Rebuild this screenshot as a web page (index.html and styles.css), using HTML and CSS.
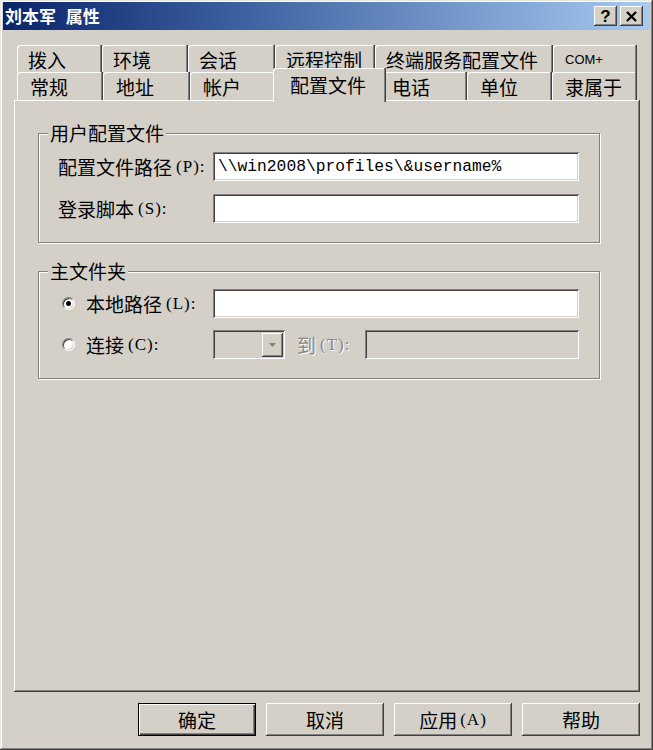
FILE: index.html
```html
<!DOCTYPE html>
<html lang="zh-CN">
<head>
<meta charset="utf-8">
<title>刘本军 属性</title>
<link rel="stylesheet" href="styles.css">
</head>
<body>
<div class="window">
  <div class="titlebar">
    <span class="title">刘本军 属性</span>
    <div class="tbtns">
      <span class="tbtn help">?</span>
      <span class="tbtn close"><svg width="11" height="11" viewBox="0 0 11 11"><path d="M1 1 L10 10 M10 1 L1 10" stroke="#000" stroke-width="2.2" fill="none"/></svg></span>
    </div>
  </div>
  <div class="content">
    <div class="tabs">
      <div class="tabrow row1">
        <div class="tab">拨入</div>
        <div class="tab">环境</div>
        <div class="tab">会话</div>
        <div class="tab">远程控制</div>
        <div class="tab">终端服务配置文件</div>
        <div class="tab latin">COM+</div>
      </div>
      <div class="tabrow row2">
        <div class="tab">常规</div>
        <div class="tab">地址</div>
        <div class="tab">帐户</div>
        <div class="tab active">配置文件</div>
        <div class="tab tight">电话</div>
        <div class="tab">单位</div>
        <div class="tab">隶属于</div>
      </div>
    </div>
    <div class="panel">
      <fieldset class="group g1">
        <legend>用户配置文件</legend>
        <div class="form">
          <label class="lbl">配置文件路径<span class="acc">(P):</span></label>
          <div class="field">\\win2008\profiles\&amp;username%</div>
          <label class="lbl">登录脚本<span class="acc">(S):</span></label>
          <div class="field"></div>
        </div>
      </fieldset>
      <fieldset class="group g2">
        <legend>主文件夹</legend>
        <div class="form">
          <label class="lbl opt"><span class="radio checked"></span>本地路径<span class="acc">(L):</span></label>
          <div class="field"></div>
          <label class="lbl opt"><span class="radio"></span>连接<span class="acc">(C):</span></label>
          <div class="connect">
            <div class="combo"><span class="drop"><svg width="9" height="6" viewBox="0 0 9 6"><path d="M1 1 H8 L4.5 5 Z" fill="#808080"/></svg></span></div>
            <span class="to">到<span class="acc">(T):</span></span>
            <div class="field disabled"></div>
          </div>
        </div>
      </fieldset>
    </div>
    <div class="buttons">
      <button class="btn default">确定</button>
      <button class="btn">取消</button>
      <button class="btn">应用<span class="acc">(A)</span></button>
      <button class="btn">帮助</button>
    </div>
  </div>
</div>
</body>
</html>
```
FILE: styles.css
```css
* { box-sizing: border-box; }
html, body { margin: 0; padding: 0; }
body {
  width: 653px;
  height: 750px;
  overflow: hidden;
  background: #d4d0c8;
  font-family: "Noto Sans CJK SC", "Noto Sans", sans-serif;
  color: #000;
}
.window {
  width: 653px;
  height: 750px;
  padding: 2px 3px 3px 3px;
  background: #d4d0c8;
  box-shadow: inset -1px -1px 0 #404040, inset 1px 1px 0 #e8e6e0, inset -2px -2px 0 #808080, inset 2px 2px 0 #fff;
  display: flex;
  flex-direction: column;
}
.titlebar {
  height: 28px;
  flex: none;
  background: linear-gradient(to right, #0a246a 0%, #3a5e9e 35%, #a6caf0 100%);
  display: flex;
  align-items: center;
  justify-content: space-between;
  padding: 0 7px 0 2px;
}
.title {
  color: #fff;
  font-weight: 700;
  font-size: 17px;
  line-height: 20px;
  word-spacing: 6px;
  white-space: pre;
}
.tbtns { display: flex; gap: 3px; }
.tbtn {
  width: 23px;
  height: 20px;
  background: #d4d0c8;
  box-shadow: inset -1px -1px 0 #404040, inset 1px 1px 0 #fff, inset -2px -2px 0 #808080;
  display: flex;
  align-items: center;
  justify-content: center;
  font-family: "Liberation Sans", Arial, sans-serif;
  font-weight: 700;
  font-size: 17px;
  line-height: 1;
}
.content {
  flex: 1;
  padding: 15px 10px 0 11px;
  display: flex;
  flex-direction: column;
}
.tabs { padding: 0 3px; flex: none; }
.tabrow { display: grid; }
.row1 { grid-template-columns: 85px 86px 87px 100px 178px 84px; height: 27px; }
.row2 { grid-template-columns: 86px 87px 85px 109px 83px 85px 85px; height: 28px; }
.tab {
  background: #d4d0c8;
  border-top-left-radius: 3px;
  box-shadow: inset -1px 0 0 #404040, inset -2px 0 0 #808080, inset 1px 1px 0 #fff;
  font-size: 19px;
  line-height: 19px;
  padding-left: 11px;
  padding-top: 1px;
  display: flex;
  align-items: center;
  white-space: nowrap;
}
.row2 .tab { padding-left: 13px; }
.row2 .tab.tight { padding-left: 8px; }
.tab.latin {
  font-family: "Liberation Sans", Arial, sans-serif;
  font-size: 13px;
  padding-left: 12px;
}
.tab.active {
  position: relative;
  z-index: 1;
  margin: -4px -2px -2px -2px;
  padding-left: 17px;
  padding-top: 0;
  padding-bottom: 2px;
}
.panel {
  height: 592px;
  flex: none;
  background: #d4d0c8;
  box-shadow: inset -1px -1px 0 #404040, inset 1px 1px 0 #fff, inset -2px -2px 0 #808080;
  padding: 23px 40px 0 24px;
}
.group {
  margin: 0;
  padding: 0;
  min-width: 0;
  border: 1px solid #808080;
  box-shadow: 1px 1px 0 #fff, inset 1px 1px 0 #fff;
}
.group legend {
  margin-left: 9px;
  padding: 0 2px;
  font-size: 19px;
  line-height: 20px;
  background: #d4d0c8;
}
.g2 { margin-top: 18px; }
.form {
  display: grid;
  grid-template-columns: 155px 366px;
  grid-auto-rows: 29px;
  align-items: center;
  padding: 9px 0 19px 19px;
}
.g1 .form { row-gap: 13px; }
.g2 .form { row-gap: 12px; padding-top: 8px; }
.lbl {
  font-size: 19px;
  line-height: 29px;
  white-space: nowrap;
  display: flex;
  align-items: center;
}
.acc {
  font-family: "Liberation Serif", "Times New Roman", serif;
  font-size: 17px;
  letter-spacing: 1px;
  margin-left: 4px;
}
.opt { padding-left: 4px; }
.radio {
  width: 13px;
  height: 13px;
  border-radius: 50%;
  background: #fff;
  border: 1px solid;
  border-color: #808080 #fff #fff #808080;
  box-shadow: inset 1px 1px 0 #404040, inset -1px -1px 0 #d4d0c8;
  margin-right: 11px;
  flex: none;
  display: flex;
  align-items: center;
  justify-content: center;
}
.radio.checked::after {
  content: "";
  width: 5px;
  height: 5px;
  border-radius: 50%;
  background: #000;
}
.field {
  height: 29px;
  background: #fff;
  box-shadow: inset 1px 1px 0 #808080, inset -1px -1px 0 #fff, inset 2px 2px 0 #404040, inset -2px -2px 0 #d4d0c8;
  padding-left: 5px;
  font-family: "Liberation Mono", "Courier New", monospace;
  font-size: 16.3px;
  line-height: 29px;
  white-space: pre;
  overflow: hidden;
}
.field.disabled { background: #d4d0c8; width: 214px; margin-left: auto; }
.connect { display: flex; align-items: center; height: 29px; }
.combo {
  width: 72px;
  height: 29px;
  background: #d4d0c8;
  box-shadow: inset 1px 1px 0 #808080, inset -1px -1px 0 #fff, inset 2px 2px 0 #404040, inset -2px -2px 0 #d4d0c8;
  display: flex;
  justify-content: flex-end;
  align-items: center;
  padding-right: 2px;
}
.drop {
  width: 21px;
  height: 24px;
  background: #d4d0c8;
  box-shadow: inset -1px -1px 0 #404040, inset 1px 1px 0 #fff, inset -2px -2px 0 #808080;
  display: flex;
  align-items: center;
  justify-content: center;
}
.to {
  margin-left: 12px;
  font-size: 19px;
  color: #8a8780;
  text-shadow: 1px 1px 0 #fff;
  white-space: nowrap;
  display: flex;
  align-items: center;
}
.buttons {
  display: flex;
  justify-content: flex-end;
  gap: 10px;
  margin-top: 11px;
  flex: none;
}
.btn {
  width: 118px;
  height: 33px;
  margin: 0;
  padding: 0;
  border: none;
  background: #d4d0c8;
  box-shadow: inset -1px -1px 0 #404040, inset 1px 1px 0 #fff, inset -2px -2px 0 #808080;
  font-family: "Noto Sans CJK SC", "Noto Sans", sans-serif;
  font-size: 19px;
  line-height: 33px;
  color: #000;
  display: flex;
  align-items: center;
  justify-content: center;
}
.btn .acc { margin-left: 3px; }
.btn.default {
  box-shadow: inset 0 0 0 1px #000, inset 2px 2px 0 #fff, inset -2px -2px 0 #404040, inset -3px -3px 0 #808080;
}
```
